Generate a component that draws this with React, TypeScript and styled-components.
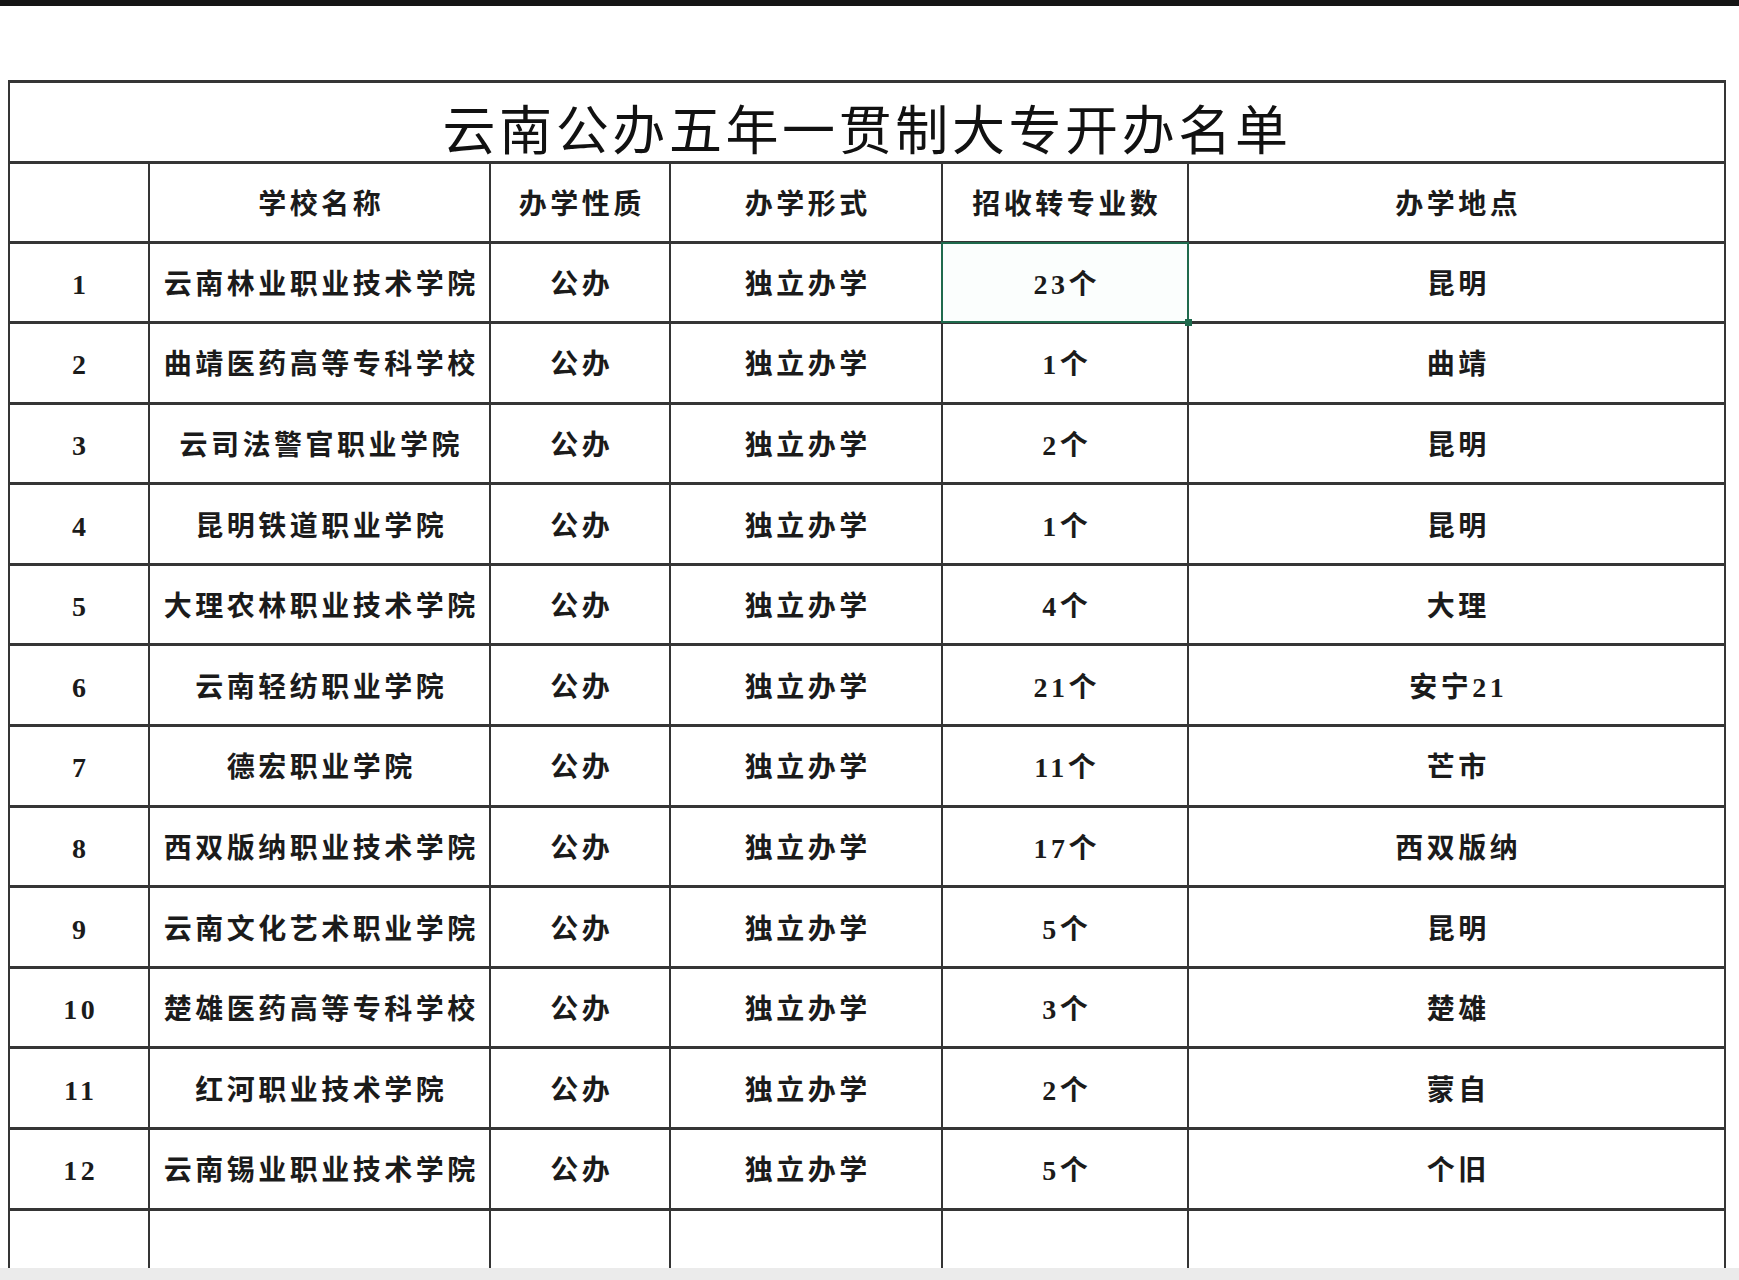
import styled, { createGlobalStyle } from 'styled-components';

const GlobalStyle = createGlobalStyle`
    html, body {
        margin: 0;
        padding: 0;
        background: #ffffff;
    }
    body {
        font-family: "Liberation Serif", "Noto Sans CJK SC", serif;
    }
`;

const rows = [
    ['1', '云南林业职业技术学院', '公办', '独立办学', '23个', '昆明'],
    ['2', '曲靖医药高等专科学校', '公办', '独立办学', '1个', '曲靖'],
    ['3', '云司法警官职业学院', '公办', '独立办学', '2个', '昆明'],
    ['4', '昆明铁道职业学院', '公办', '独立办学', '1个', '昆明'],
    ['5', '大理农林职业技术学院', '公办', '独立办学', '4个', '大理'],
    ['6', '云南轻纺职业学院', '公办', '独立办学', '21个', '安宁21'],
    ['7', '德宏职业学院', '公办', '独立办学', '11个', '芒市'],
    ['8', '西双版纳职业技术学院', '公办', '独立办学', '17个', '西双版纳'],
    ['9', '云南文化艺术职业学院', '公办', '独立办学', '5个', '昆明'],
    ['10', '楚雄医药高等专科学校', '公办', '独立办学', '3个', '楚雄'],
    ['11', '红河职业技术学院', '公办', '独立办学', '2个', '蒙自'],
    ['12', '云南锡业职业技术学院', '公办', '独立办学', '5个', '个旧'],
];

const headers = ['', '学校名称', '办学性质', '办学形式', '招收转专业数', '办学地点'];

function App() {
    return (
        <>
            <GlobalStyle />
            <Page>
                <TopBar />
                <SheetArea>
                    <Sheet>
                        <TitleCell>
                            <Title>云南公办五年一贯制大专开办名单</Title>
                        </TitleCell>
                        {headers.map((h, i) => (
                            <Cell key={'h' + i}>
                                <CellText>{h}</CellText>
                            </Cell>
                        ))}
                        {rows.map((row, r) =>
                            row.map((value, c) => (
                                <Cell key={r + '-' + c} $selected={r === 0 && c === 4}>
                                    <CellText>{value}</CellText>
                                </Cell>
                            ))
                        )}
                        {headers.map((_, i) => (
                            <Cell key={'e' + i} />
                        ))}
                    </Sheet>
                </SheetArea>
                <BottomBand />
            </Page>
        </>
    );
}

const Page = styled.div`
    width: 1739px;
    height: 1280px;
    display: flex;
    flex-direction: column;
    overflow: hidden;
    background: #ffffff;
`

const TopBar = styled.div`
    height: 6px;
    flex-shrink: 0;
    background: #151515;
`

const SheetArea = styled.div`
    flex: 1;
    padding: 74px 0 0 8px;
    overflow: hidden;
`

const Sheet = styled.div`
    width: 1718px;
    box-sizing: border-box;
    display: grid;
    grid-template-columns: 138px 339px 178px 270px 244px 535px;
    grid-template-rows: 78px 76.5px repeat(12, 77.6px) 60px;
    column-gap: 2px;
    row-gap: 3px;
    padding: 3px 2px 0 2px;
    background: #353535;
`

const TitleCell = styled.div`
    grid-column: 1 / -1;
    background: #ffffff;
    display: flex;
    align-items: center;
    justify-content: center;
    padding-top: 10px;
    box-sizing: border-box;
`

const Title = styled.span`
    font-family: "Noto Sans CJK SC", sans-serif;
    font-size: 53px;
    font-weight: 400;
    letter-spacing: 3.6px;
    color: #111111;
    line-height: 1;
`

const Cell = styled.div<{ $selected?: boolean }>`
    position: relative;
    background: ${(p) => (p.$selected ? '#fbfefd' : '#ffffff')};
    display: flex;
    align-items: center;
    justify-content: center;
    padding-top: 5px;
    box-sizing: border-box;

    ${(p) =>
        p.$selected &&
        `
        &::after {
            content: '';
            position: absolute;
            inset: -2px;
            border: 2px solid #1f6a4d;
            z-index: 1;
        }
        &::before {
            content: '';
            position: absolute;
            right: -5px;
            bottom: -5px;
            width: 7px;
            height: 7px;
            background: #1f6a4d;
            z-index: 2;
        }
    `}
`

const CellText = styled.span`
    font-family: "Liberation Serif", "Noto Sans CJK SC", serif;
    font-size: 28px;
    font-weight: 700;
    letter-spacing: 3.5px;
    margin-right: -3.5px;
    color: #1b1b1b;
    line-height: 1;
    white-space: nowrap;
`

const BottomBand = styled.div`
    height: 12px;
    flex-shrink: 0;
    background: #ebebeb;
`

export default App;
